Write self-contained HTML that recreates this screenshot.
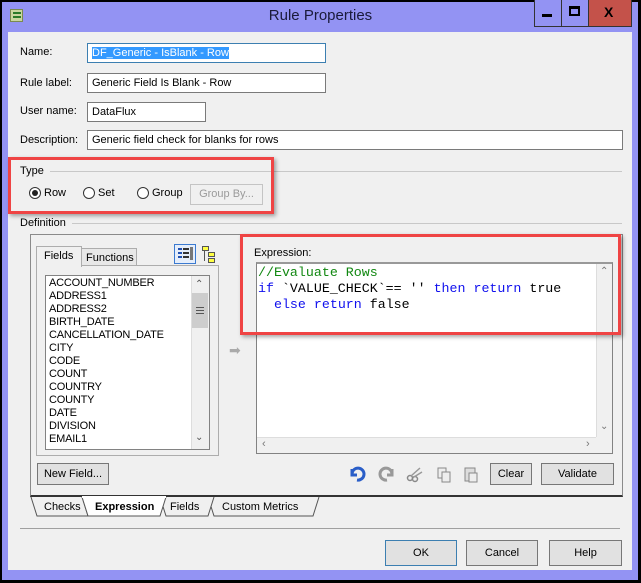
<!DOCTYPE html>
<html><head><meta charset="utf-8"><style>
*{box-sizing:border-box;margin:0;padding:0}
body{width:641px;height:583px;background:#000;font-family:"Liberation Sans",sans-serif;font-size:11px;color:#000;position:relative;overflow:hidden}
.a{position:absolute}
.frame{left:2px;top:2px;width:636px;height:578px;background:#9393f3}
.client{left:8px;top:32px;width:624px;height:538px;background:#f0f0f0}
.tb{font-size:15px;color:#1a1a3a;left:0;width:641px;top:7px;text-align:center}
.fld{background:#fff;border:1px solid #7a7a7a;height:20px;padding:2px 4px;font-size:11px;line-height:14px}
.lbl{font-size:11px}
.btn{background:#e1e1e1;border:1px solid #adadad;text-align:center;font-size:11px;line-height:19px}
.line{height:1px;background:#c8c8c8}
.red{border:3px solid #ef4444;box-shadow:2px 2px 4px rgba(0,0,0,.35)}
.radio{width:12px;height:12px;border:1px solid #333;border-radius:50%;background:#fff}
.mono{font-family:"Liberation Mono",monospace;font-size:13.3px;line-height:16px;white-space:pre}
.kw{color:#1010ee}
.list div{line-height:13px;height:13px;font-size:11px;letter-spacing:-0.2px}
</style></head><body>
<div class="a frame"></div>
<div class="a tb">Rule Properties</div>
<div class="a" style="left:10px;top:9px;width:13px;height:13px;background:#c9d6a0;border:1px solid #7a8a50"></div>
<div class="a" style="left:13px;top:12px;width:8px;height:2px;background:#2a7a2a"></div>
<div class="a" style="left:13px;top:16px;width:8px;height:2px;background:#2a7a2a"></div>
<div class="a" style="left:534px;top:0;width:98px;height:27px;border:1px solid #333;border-top:none;background:#9393f3"></div>
<div class="a" style="left:561px;top:0;width:1px;height:27px;background:#333"></div>
<div class="a" style="left:588px;top:0;width:44px;height:27px;background:#c4524a;border:1px solid #333;border-top:none"></div>
<div class="a" style="left:542px;top:14px;width:10px;height:3px;background:#000"></div>
<div class="a" style="left:569px;top:6px;width:11px;height:10px;border:2px solid #000;border-top-width:3px"></div>
<div class="a" style="left:604px;top:4px;font-size:14px;font-weight:bold">X</div>

<div class="a client"></div>
<div class="a lbl" style="left:20px;top:46px">Name:</div>
<div class="a fld" style="left:87px;top:43px;width:239px;border-color:#3c7fb1"><span style="background:#3399ff;color:#fff">DF_Generic - IsBlank - Row</span></div>
<div class="a lbl" style="left:20px;top:77px">Rule label:</div>
<div class="a fld" style="left:87px;top:73px;width:239px">Generic Field Is Blank - Row</div>
<div class="a lbl" style="left:20px;top:105px">User name:</div>
<div class="a fld" style="left:87px;top:102px;width:119px">DataFlux</div>
<div class="a lbl" style="left:20px;top:134px">Description:</div>
<div class="a fld" style="left:87px;top:130px;width:536px">Generic field check for blanks for rows</div>

<div class="a lbl" style="left:20px;top:165px">Type</div>
<div class="a line" style="left:50px;top:171px;width:572px"></div>
<div class="a radio" style="left:29px;top:187px"></div>
<div class="a" style="left:32px;top:190px;width:6px;height:6px;border-radius:50%;background:#222"></div>
<div class="a lbl" style="left:44px;top:187px">Row</div>
<div class="a radio" style="left:83px;top:187px"></div>
<div class="a lbl" style="left:98px;top:187px">Set</div>
<div class="a radio" style="left:137px;top:187px"></div>
<div class="a lbl" style="left:152px;top:187px">Group</div>
<div class="a btn" style="left:190px;top:184px;width:73px;height:21px;color:#9a9a9a;background:#f0f0f0;border-color:#c4c4c4">Group By...</div>
<div class="a red" style="left:8px;top:157px;width:266px;height:57px"></div>

<div class="a lbl" style="left:20px;top:217px">Definition</div>
<div class="a line" style="left:72px;top:223px;width:550px"></div>
<div class="a" style="left:30px;top:234px;width:593px;height:263px;border:1px solid #8a8a8a;border-bottom:2px solid #333"></div>

<div class="a" style="left:36px;top:265px;width:183px;height:191px;border:1px solid #adadad;background:#f0f0f0"></div>
<div class="a" style="left:81px;top:248px;width:56px;height:18px;border:1px solid #adadad;background:#e8e8e8;padding:3px 0 0 4px">Functions</div>
<div class="a" style="left:36px;top:246px;width:46px;height:21px;border:1px solid #adadad;border-bottom:none;background:#f0f0f0;padding:3px 0 0 7px">Fields</div>
<div class="a" style="left:45px;top:275px;width:165px;height:175px;border:1px solid #828282;background:#fff"></div>
<div class="a list" style="left:49px;top:277px">
<div>ACCOUNT_NUMBER</div><div>ADDRESS1</div><div>ADDRESS2</div><div>BIRTH_DATE</div><div>CANCELLATION_DATE</div><div>CITY</div><div>CODE</div><div>COUNT</div><div>COUNTRY</div><div>COUNTY</div><div>DATE</div><div>DIVISION</div><div>EMAIL1</div></div>
<div class="a" style="left:191px;top:276px;width:18px;height:173px;background:#f0f0f0;border-left:1px solid #ddd"></div>
<div class="a" style="left:192px;top:293px;width:16px;height:35px;background:#cdcdcd"></div>
<div class="a" style="left:196px;top:307px;width:8px;height:1px;background:#555;box-shadow:0 3px #555,0 6px #555"></div>
<div class="a" style="left:195px;top:279px;font-size:10px;color:#555">&#8963;</div>
<div class="a" style="left:195px;top:432px;font-size:10px;color:#555">&#8964;</div>

<div class="a" style="left:174px;top:244px;width:22px;height:20px;border:1px solid #3b7ad0;background:#e5eefb"></div>
<div class="a" style="left:178px;top:248px;width:4px;height:2px;background:#2050b0;box-shadow:0 4px #2050b0,0 8px #2050b0"></div>
<div class="a" style="left:183px;top:248px;width:6px;height:2px;background:#333;box-shadow:0 4px #333,0 8px #333"></div>
<div class="a" style="left:190px;top:247px;width:3px;height:13px;background:#777"></div>
<div class="a" style="left:202px;top:246px;width:7px;height:5px;background:#ff4;border:1px solid #555"></div>
<div class="a" style="left:208px;top:252px;width:7px;height:5px;background:#ff4;border:1px solid #555"></div>
<div class="a" style="left:208px;top:258px;width:7px;height:5px;background:#ff4;border:1px solid #555"></div>
<div class="a" style="left:204px;top:251px;width:1px;height:10px;background:#555"></div>

<div class="a" style="left:229px;top:344px;width:14px;height:12px;color:#aaa;font-size:14px;line-height:12px">&#10145;</div>

<div class="a lbl" style="left:254px;top:247px">Expression:</div>
<div class="a" style="left:256px;top:262px;width:357px;height:192px;border:1px solid #828282;border-top:2px solid #999;background:#fff"></div>
<div class="a mono" style="left:258px;top:265px"><span style="color:#118811">//Evaluate Rows</span>
<span class="kw">if</span> `VALUE_CHECK`== '' <span class="kw">then</span> <span class="kw">return</span> true
  <span class="kw">else</span> <span class="kw">return</span> false</div>
<div class="a" style="left:596px;top:264px;width:16px;height:173px;background:#f0f0f0;border-left:1px solid #ddd"></div>
<div class="a" style="left:257px;top:437px;width:339px;height:16px;background:#f0f0f0;border-top:1px solid #ddd"></div>
<div class="a" style="left:596px;top:437px;width:16px;height:16px;background:#f0f0f0"></div>
<div class="a" style="left:600px;top:266px;font-size:10px;color:#777">&#8963;</div>
<div class="a" style="left:600px;top:421px;font-size:10px;color:#777">&#8964;</div>
<div class="a" style="left:262px;top:438px;font-size:11px;color:#777">&lsaquo;</div>
<div class="a" style="left:586px;top:438px;font-size:11px;color:#777">&rsaquo;</div>
<div class="a red" style="left:240px;top:234px;width:381px;height:101px"></div>

<svg class="a" style="left:348px;top:465px" width="130" height="18">
<path d="M4 4 L4 10 L9 10 M4 9 A6 6 0 1 1 9 15" stroke="#2a5ec8" stroke-width="3" fill="none"/>
<path d="M44 4 L44 10 L39 10 M44 9 A6 6 0 1 0 39 15" stroke="#999" stroke-width="3" fill="none"/>
<circle cx="62" cy="13" r="2.5" stroke="#888" fill="none" stroke-width="1.5"/><circle cx="67" cy="14" r="2.5" stroke="#888" fill="none" stroke-width="1.5"/>
<path d="M63 11 L72 3 M66 12 L74 7" stroke="#999" stroke-width="1.5"/>
<rect x="90" y="3" width="8" height="10" fill="#eee" stroke="#888"/><rect x="94" y="7" width="8" height="10" fill="#eee" stroke="#888"/>
<rect x="117" y="3" width="10" height="13" fill="#ddd" stroke="#888"/><rect x="121" y="8" width="8" height="9" fill="#eee" stroke="#888"/>
</svg>
<div class="a btn" style="left:490px;top:463px;width:42px;height:22px;line-height:20px;border-color:#777">Clear</div>
<div class="a btn" style="left:541px;top:463px;width:73px;height:22px;line-height:20px;border-color:#777">Validate</div>
<div class="a btn" style="left:37px;top:463px;width:72px;height:22px;line-height:20px;border-color:#777">New Field...</div>

<svg class="a" style="left:28px;top:496px" width="300" height="22">
<path d="M3 1 L9 20 L60 20 L54 1" fill="#f0f0f0" stroke="#555"/>
<path d="M180 1 L186 20 L285 20 L291 1" fill="#f0f0f0" stroke="#555"/>
<path d="M132 1 L138 20 L180 20 L186 1" fill="#f0f0f0" stroke="#555"/>
<path d="M54 1 L60 20 L132 20 L138 1" fill="#fff" stroke="#555"/>
<line x1="54" y1="1" x2="138" y2="1" stroke="#fff" stroke-width="2"/>
</svg>
<div class="a" style="left:44px;top:501px">Checks</div>
<div class="a" style="left:95px;top:501px;font-weight:bold">Expression</div>
<div class="a" style="left:170px;top:501px">Fields</div>
<div class="a" style="left:222px;top:501px">Custom Metrics</div>

<div class="a line" style="left:20px;top:528px;width:600px;background:#a0a0a0"></div>
<div class="a btn" style="left:385px;top:540px;width:72px;height:26px;line-height:24px;border-color:#3c7fb1">OK</div>
<div class="a btn" style="left:466px;top:540px;width:72px;height:26px;line-height:24px;border-color:#777">Cancel</div>
<div class="a btn" style="left:549px;top:540px;width:73px;height:26px;line-height:24px;border-color:#777">Help</div>
</body></html>
